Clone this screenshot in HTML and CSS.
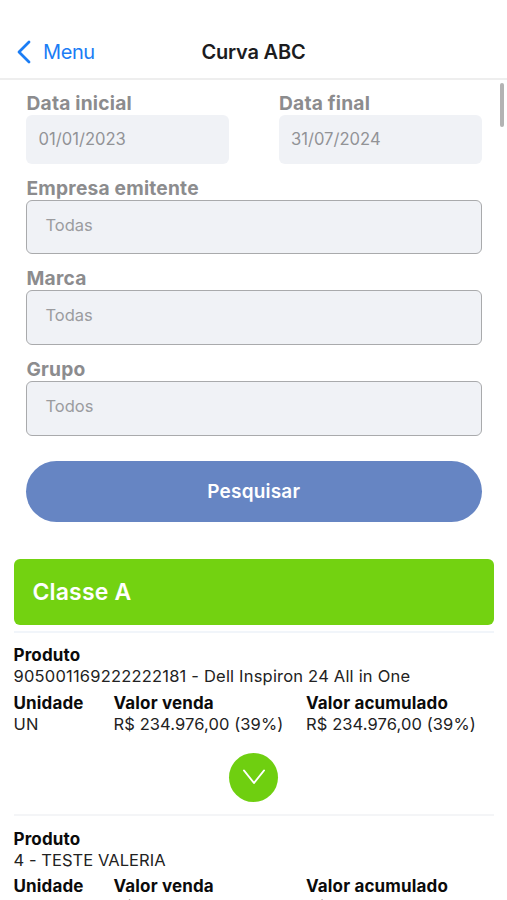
FILE: index.html
```html
<!DOCTYPE html>
<html lang="pt-BR">
<head>
<meta charset="utf-8">
<title>Curva ABC</title>
<link rel="stylesheet" href="styles.css">
</head>
<body>
<div class="screen">
  <header class="navbar">
    <a class="back"><svg class="back-icon" width="16" height="26" viewBox="0 0 16 26"><path d="M13 3 3 13l10 10"/></svg><span>Menu</span></a>
    <h1 class="title">Curva ABC</h1>
  </header>
  <main class="content">
    <div class="scrollbar"></div>
    <form class="filters">
      <div class="dates">
        <div class="field"><label class="label">Data inicial</label><div class="date">01/01/2023</div></div>
        <div class="field"><label class="label">Data final</label><div class="date">31/07/2024</div></div>
      </div>
      <div class="field group"><label class="label">Empresa emitente</label><div class="select">Todas</div></div>
      <div class="field group"><label class="label">Marca</label><div class="select">Todas</div></div>
      <div class="field group"><label class="label">Grupo</label><div class="select">Todos</div></div>
      <button class="search" type="button">Pesquisar</button>
    </form>
    <section class="results">
      <h2 class="class-title">Classe A</h2>
      <article class="product first">
        <div class="name"><strong>Produto</strong><span class="code">905001169222222181 - Dell Inspiron 24 All in One</span></div>
        <div class="values">
          <div><strong>Unidade</strong><span>UN</span></div>
          <div><strong>Valor venda</strong><span>R$ 234.976,00 (39%)</span></div>
          <div><strong>Valor acumulado</strong><span>R$ 234.976,00 (39%)</span></div>
        </div>
        <div class="expand"><svg width="24" height="16" viewBox="0 0 24 16"><path d="m2 1.5 10 12.5 10-12.5"/></svg></div>
      </article>
      <article class="product">
        <div class="name"><strong>Produto</strong><span class="caps">4 - TESTE VALERIA</span></div>
        <div class="values">
          <div><strong>Unidade</strong></div>
          <div><strong>Valor venda</strong><span>R$</span></div>
          <div><strong>Valor acumulado</strong><span>R$</span></div>
        </div>
      </article>
    </section>
  </main>
</div>
</body>
</html>
```
FILE: styles.css
```css
* { box-sizing: border-box; }
body { margin: 0; background: #fff; font-family: Inter, "Liberation Sans", sans-serif; }
h1, h2 { margin: 0; }
.screen { height: 900px; overflow: hidden; display: flex; flex-direction: column; }
.navbar {
  flex: none; height: 80px; padding: 26px 16px 0;
  display: grid; grid-template-columns: 1fr auto 1fr; align-items: center;
  border-bottom: 2px solid #eee;
}
.back { display: flex; align-items: center; gap: 11px; color: #1b7df5; font-size: 20px; letter-spacing: -0.4px; }
.back-icon { fill: none; stroke: #1b7df5; stroke-width: 2.8; stroke-linecap: round; stroke-linejoin: round; }
.title { font-size: 20px; font-weight: 600; color: #1c1c1e; letter-spacing: -0.2px; }
.content { position: relative; flex: 1; min-height: 0; }
.scrollbar { position: absolute; right: 3px; top: 3px; width: 4px; height: 44px; border-radius: 2px; background: #b3b3b3; }
.filters { padding: 11px 25.5px 0 26px; }
.dates { display: grid; grid-template-columns: 202.5px 203px; justify-content: space-between; }
.label { display: block; height: 24px; line-height: 24.5px; font-size: 19.2px; font-weight: 650; color: #8c8c8e; letter-spacing: 0.2px; padding-left: 0.5px; }
.date { height: 48.5px; padding-left: 12.5px; border-radius: 6px; background: #f0f2f6; line-height: 49px; font-size: 16.6px; color: #929396; }
.group { margin-top: 12px; }
.group + .group { margin-top: 12px; }
.select { height: 54.9px; padding-left: 18.5px; border: 1.5px solid #a9aaac; border-radius: 6px; background: #f0f2f6; line-height: 49px; font-size: 16.5px; color: #9b9c9f; }
.search { display: block; width: 100%; height: 61px; margin-top: 24.5px; border: 0; border-radius: 31px; background: #6685c3; color: #fff; font: 600 19px Inter, sans-serif; letter-spacing: 0.2px; }
.results { padding: 37px 13px 0 13.5px; }
.class-title { height: 66px; padding-left: 19px; border-radius: 6px; background: #73d211; color: #fff; font-size: 23px; font-weight: 600; letter-spacing: 0.15px; line-height: 67px; }
.product { height: 183.5px; border-top: 2px solid #f4f5f7; padding-top: 12.5px; color: #222; font-size: 16.5px; letter-spacing: 0.1px; line-height: 21px; }
.first { margin-top: 6px; border-color: #f1f5fa; }
.product strong, .product span { display: block; white-space: nowrap; }
.product .code { letter-spacing: 0.2px; }
.product strong { color: #0b0b0b; font-size: 17px; font-weight: 680; letter-spacing: 0.15px; }
.product .caps { letter-spacing: 0.05px; }
.values { display: grid; grid-template-columns: 100px 192.5px 1fr; margin-top: 5.5px; }
.expand { display: flex; align-items: center; justify-content: center; width: 49px; height: 49px; margin: 18px auto 0; border-radius: 50%; background: #6fcf10; }
.expand svg { fill: none; stroke: #fff; stroke-width: 2; stroke-linecap: round; stroke-linejoin: round; }
```
